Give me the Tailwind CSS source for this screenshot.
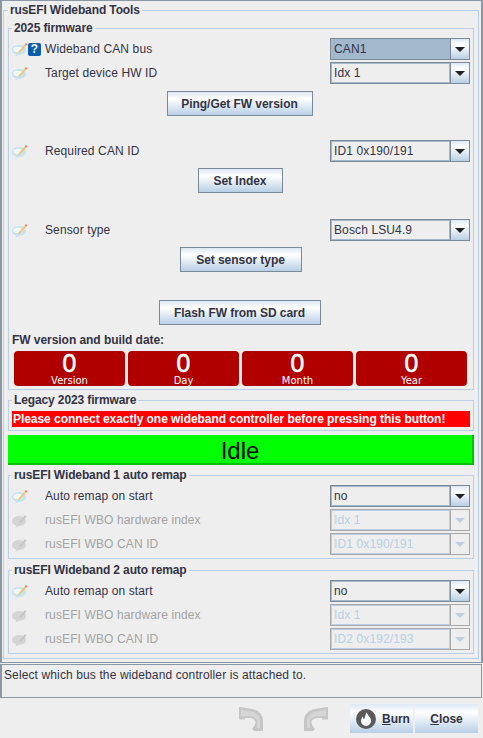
<!DOCTYPE html>
<html lang="en">
<head>
<meta charset="UTF-8">
<title>rusEFI Wideband Tools</title>
<script src="https://cdn.jsdelivr.net/npm/@tailwindcss/browser@4"></script>
</head>
<body class="w-[483px] h-[738px] overflow-hidden bg-[#eeeeee] font-['Liberation_Sans',Arial,sans-serif] text-[12px] tracking-[0.12px] text-[#333344]">

<svg width="0" height="0" class="absolute">
  <symbol id="note" viewBox="0 0 16 16">
    <ellipse cx="7" cy="9" rx="7" ry="5" fill="#c4e2f0"/>
    <ellipse cx="6" cy="8.500" rx="4.500" ry="2.800" fill="#f2fafd"/>
    <path d="M4 13l-.5 2.500L7.500 13.500z" fill="#c4e2f0"/>
    <path d="M6.500 10.500L12.800 3.200l1.700 1.400L8 11.800l-2 .6z" fill="#f2c878"/>
    <path d="M12.800 3.200l1-1.200 1.700 1.300-1 1.300z" fill="#e8756a"/>
  </symbol>
  <symbol id="note-off" viewBox="0 0 16 16">
    <ellipse cx="7" cy="9" rx="7" ry="5" fill="#d4d4d4"/>
    <path d="M4 13l-.5 2.500L7.500 13.500z" fill="#d4d4d4"/>
    <path d="M7 10L13 3l1.600 1.400L8.500 11.500z" fill="#c8c8c8"/>
  </symbol>
  <symbol id="drop" viewBox="0 0 19 20">
    <path d="M4 8h10l-5 5z" fill="#222222"/>
  </symbol>
  <symbol id="drop-off" viewBox="0 0 19 20">
    <path d="M4 8h10l-5 5z" fill="#b8cfe5"/>
  </symbol>
  <symbol id="undo" viewBox="0 0 24 24">
    <path d="M0 0l4 .5 9 1.500c7 1 11 6 11 12v10h-9l-2-2c2-2 3.500-5 3.500-7.500-1-2-3-3.500-6-3.500H6v1.500H0z" fill="#c6c6c6"/>
    <path d="M2 3l10 1.500c5 1 9 5 9 9.500v7h-3c0-4 1-6 0-8-2-3-5-4-9-4H2z" fill="#d6d6d6"/>
  </symbol>
</svg>

<!-- main panel -->
<div class="h-[663px] pl-px pr-[2px] pt-px border-t border-b border-x-2 border-[#8a97a5]">
  <fieldset class="border border-[#b8cfe5] pl-1 pr-1 h-[657px]">
    <legend class="px-0.5 h-4 leading-4 font-bold tracking-[-0.12px]">rusEFI Wideband Tools</legend>

    <fieldset class="border border-[#b8cfe5] pl-[3px] pr-[3px] h-[370px] mt-[2px]">
      <legend class="px-0.5 h-4 leading-4 font-bold tracking-[-0.12px]">2025 firmware</legend>

      <div class="flex items-center h-[22px] mt-[2px]">
        <svg class="w-4 h-4"><use href="#note"/></svg>
        <span class="w-[13px] h-[13px] rounded-[2px] bg-[#0a5cab] text-white text-[12px] leading-[13px] font-bold text-center">?</span>
        <span class="ml-[4px]">Wideband CAN bus</span>
        <div class="ml-auto w-[140px] h-[22px] flex border border-[#7a8a99]">
          <div class="flex-1 border border-[#a3b8cc] bg-[#a3b8cc] pl-0.5 leading-[18px]">CAN1</div>
          <div class="w-[19px] border-l border-[#7a8a99] bg-[linear-gradient(#dde8f3,#ffffff_30%,#b8cfe5)]"><svg class="w-[19px] h-5"><use href="#drop"/></svg></div>
        </div>
      </div>
      <div class="flex items-center h-[22px] mt-[2px]">
        <svg class="w-4 h-4"><use href="#note"/></svg>
        <span class="ml-[17px]">Target device HW ID</span>
        <div class="ml-auto w-[140px] h-[22px] flex border border-[#7a8a99]">
          <div class="flex-1 border border-[#a3b8cc] pl-0.5 leading-[18px]">Idx 1</div>
          <div class="w-[19px] border-l border-[#7a8a99] bg-[linear-gradient(#dde8f3,#ffffff_30%,#b8cfe5)]"><svg class="w-[19px] h-5"><use href="#drop"/></svg></div>
        </div>
      </div>
      <div class="flex justify-center pr-[3px] mt-[7px]">
        <button class="w-[146px] h-[25px] border border-[#7a8a99] font-bold tracking-[-0.05px] bg-[linear-gradient(#dde8f3,#ffffff_30%,#b8cfe5)]">Ping/Get FW version</button>
      </div>

      <div class="flex items-center h-[22px] mt-6">
        <svg class="w-4 h-4"><use href="#note"/></svg>
        <span class="ml-[17px]">Required CAN ID</span>
        <div class="ml-auto w-[140px] h-[22px] flex border border-[#7a8a99]">
          <div class="flex-1 border border-[#a3b8cc] pl-0.5 leading-[18px]">ID1 0x190/191</div>
          <div class="w-[19px] border-l border-[#7a8a99] bg-[linear-gradient(#dde8f3,#ffffff_30%,#b8cfe5)]"><svg class="w-[19px] h-5"><use href="#drop"/></svg></div>
        </div>
      </div>
      <div class="flex justify-center pr-[2px] mt-1.5">
        <button class="w-[85px] h-[25px] border border-[#7a8a99] font-bold tracking-[-0.05px] bg-[linear-gradient(#dde8f3,#ffffff_30%,#b8cfe5)]">Set Index</button>
      </div>

      <div class="flex items-center h-[22px] mt-[26px]">
        <svg class="w-4 h-4"><use href="#note"/></svg>
        <span class="ml-[17px]">Sensor type</span>
        <div class="ml-auto w-[140px] h-[22px] flex border border-[#7a8a99]">
          <div class="flex-1 border border-[#a3b8cc] pl-0.5 leading-[18px]">Bosch LSU4.9</div>
          <div class="w-[19px] border-l border-[#7a8a99] bg-[linear-gradient(#dde8f3,#ffffff_30%,#b8cfe5)]"><svg class="w-[19px] h-5"><use href="#drop"/></svg></div>
        </div>
      </div>
      <div class="flex justify-center pr-px mt-1.5">
        <button class="w-[122px] h-[25px] border border-[#7a8a99] font-bold tracking-[-0.05px] bg-[linear-gradient(#dde8f3,#ffffff_30%,#b8cfe5)]">Set sensor type</button>
      </div>

      <div class="flex justify-center pr-[3px] mt-7">
        <button class="w-[162px] h-[25px] border border-[#7a8a99] font-bold tracking-[-0.05px] bg-[linear-gradient(#dde8f3,#ffffff_30%,#b8cfe5)]">Flash FW from SD card</button>
      </div>

      <div class="font-bold tracking-[-0.05px] h-4 leading-4 mt-[7px]">FW version and build date:</div>
      <div class="flex gap-[3px] ml-0.5 mt-[3px] text-white text-center tracking-normal font-['DejaVu_Sans',sans-serif]">
        <div class="w-[111px] h-[35px] rounded-[4px] bg-[#b00000]"><div class="text-[24px] leading-[24px] mt-px [-webkit-text-stroke:0.4px_white]">0</div><div class="text-[10px] leading-[10px]">Version</div></div>
        <div class="w-[111px] h-[35px] rounded-[4px] bg-[#b00000]"><div class="text-[24px] leading-[24px] mt-px [-webkit-text-stroke:0.4px_white]">0</div><div class="text-[10px] leading-[10px]">Day</div></div>
        <div class="w-[111px] h-[35px] rounded-[4px] bg-[#b00000]"><div class="text-[24px] leading-[24px] mt-px [-webkit-text-stroke:0.4px_white]">0</div><div class="text-[10px] leading-[10px]">Month</div></div>
        <div class="w-[111px] h-[35px] rounded-[4px] bg-[#b00000]"><div class="text-[24px] leading-[24px] mt-px [-webkit-text-stroke:0.4px_white]">0</div><div class="text-[10px] leading-[10px]">Year</div></div>
      </div>
    </fieldset>

    <fieldset class="border border-[#b8cfe5] pl-[3px] pr-[3px] h-[39px] mt-[2px]">
      <legend class="px-0.5 h-4 leading-4 font-bold tracking-[-0.12px]">Legacy 2023 firmware</legend>
      <div class="h-4 leading-4 bg-[#ff0000] text-white font-bold tracking-[-0.05px] pl-px mt-[3px]">Please connect exactly one wideband controller before pressing this button!</div>
    </fieldset>

    <div class="h-[30px] mt-[4px] bg-[#00ff00] border-b-2 border-r-2 border-[#00c000] text-black text-center text-[24px] tracking-normal leading-[31px]">Idle</div>

    <fieldset class="border border-[#b8cfe5] pl-[3px] pr-[3px] h-[92px] mt-[2px]">
      <legend class="px-0.5 h-4 leading-4 font-bold tracking-[-0.12px]">rusEFI Wideband 1 auto remap</legend>
      <div class="flex items-center h-[22px] mt-[2px]">
        <svg class="w-4 h-4"><use href="#note"/></svg>
        <span class="ml-[17px]">Auto remap on start</span>
        <div class="ml-auto w-[140px] h-[22px] flex border border-[#7a8a99]">
          <div class="flex-1 border border-[#a3b8cc] pl-0.5 leading-[18px]">no</div>
          <div class="w-[19px] border-l border-[#7a8a99] bg-[linear-gradient(#dde8f3,#ffffff_30%,#b8cfe5)]"><svg class="w-[19px] h-5"><use href="#drop"/></svg></div>
        </div>
      </div>
      <div class="flex items-center h-[22px] mt-[2px] text-[#a3a3a3]">
        <svg class="w-4 h-4"><use href="#note-off"/></svg>
        <span class="ml-[17px]">rusEFI WBO hardware index</span>
        <div class="ml-auto w-[140px] h-[22px] flex border border-[#a8a8a8] text-[#b8cfe5]">
          <div class="flex-1 border border-[#b8cfe5] pl-0.5 leading-[18px]">Idx 1</div>
          <div class="w-[19px] border-l border-[#a8a8a8]"><svg class="w-[19px] h-5"><use href="#drop-off"/></svg></div>
        </div>
      </div>
      <div class="flex items-center h-[22px] mt-[2px] text-[#a3a3a3]">
        <svg class="w-4 h-4"><use href="#note-off"/></svg>
        <span class="ml-[17px]">rusEFI WBO CAN ID</span>
        <div class="ml-auto w-[140px] h-[22px] flex border border-[#a8a8a8] text-[#b8cfe5]">
          <div class="flex-1 border border-[#b8cfe5] pl-0.5 leading-[18px]">ID1 0x190/191</div>
          <div class="w-[19px] border-l border-[#a8a8a8]"><svg class="w-[19px] h-5"><use href="#drop-off"/></svg></div>
        </div>
      </div>
    </fieldset>

    <fieldset class="border border-[#b8cfe5] pl-[3px] pr-[3px] h-[92px] mt-[3px]">
      <legend class="px-0.5 h-4 leading-4 font-bold tracking-[-0.12px]">rusEFI Wideband 2 auto remap</legend>
      <div class="flex items-center h-[22px] mt-[2px]">
        <svg class="w-4 h-4"><use href="#note"/></svg>
        <span class="ml-[17px]">Auto remap on start</span>
        <div class="ml-auto w-[140px] h-[22px] flex border border-[#7a8a99]">
          <div class="flex-1 border border-[#a3b8cc] pl-0.5 leading-[18px]">no</div>
          <div class="w-[19px] border-l border-[#7a8a99] bg-[linear-gradient(#dde8f3,#ffffff_30%,#b8cfe5)]"><svg class="w-[19px] h-5"><use href="#drop"/></svg></div>
        </div>
      </div>
      <div class="flex items-center h-[22px] mt-[2px] text-[#a3a3a3]">
        <svg class="w-4 h-4"><use href="#note-off"/></svg>
        <span class="ml-[17px]">rusEFI WBO hardware index</span>
        <div class="ml-auto w-[140px] h-[22px] flex border border-[#a8a8a8] text-[#b8cfe5]">
          <div class="flex-1 border border-[#b8cfe5] pl-0.5 leading-[18px]">Idx 1</div>
          <div class="w-[19px] border-l border-[#a8a8a8]"><svg class="w-[19px] h-5"><use href="#drop-off"/></svg></div>
        </div>
      </div>
      <div class="flex items-center h-[22px] mt-[2px] text-[#a3a3a3]">
        <svg class="w-4 h-4"><use href="#note-off"/></svg>
        <span class="ml-[17px]">rusEFI WBO CAN ID</span>
        <div class="ml-auto w-[140px] h-[22px] flex border border-[#a8a8a8] text-[#b8cfe5]">
          <div class="flex-1 border border-[#b8cfe5] pl-0.5 leading-[18px]">ID2 0x192/193</div>
          <div class="w-[19px] border-l border-[#a8a8a8]"><svg class="w-[19px] h-5"><use href="#drop-off"/></svg></div>
        </div>
      </div>
    </fieldset>
  </fieldset>
</div>

<!-- hint -->
<div class="mt-px mr-px h-[34px] border border-l-2 border-[#8a97a5] pl-[2px] pt-[2px] leading-4">Select which bus the wideband controller is attached to.</div>

<!-- bottom buttons -->
<div class="flex items-center h-[29px] mt-[6px] pr-[5px]">
  <svg class="ml-[239px] w-6 h-6"><use href="#undo"/></svg>
  <svg class="ml-[41px] w-6 h-6 -scale-x-100"><use href="#undo"/></svg>
  <button class="ml-auto w-[63px] h-[29px] flex items-center pl-1.5 font-bold tracking-[-0.05px] bg-[linear-gradient(#dde8f3,#ffffff_30%,#b8cfe5)]">
    <svg class="w-5 h-5 shrink-0" viewBox="0 0 20 20"><circle cx="10" cy="10" r="10" fill="#5a5a5a"/><path d="M10.500 3c.5 3 4.500 5 4.500 9a5 5 0 0 1-10 0c0-2 1-3.500 2-4.500 0 2 .5 2.500 1 3 1-2 1.500-5 2.500-7.500z" fill="#ffffff"/></svg>
    <span class="ml-1.5"><u>B</u>urn</span>
  </button>
  <button class="ml-[2px] w-[63px] h-[29px] font-bold tracking-[-0.05px] bg-[linear-gradient(#dde8f3,#ffffff_30%,#b8cfe5)]"><u>C</u>lose</button>
</div>
</body>
</html>
